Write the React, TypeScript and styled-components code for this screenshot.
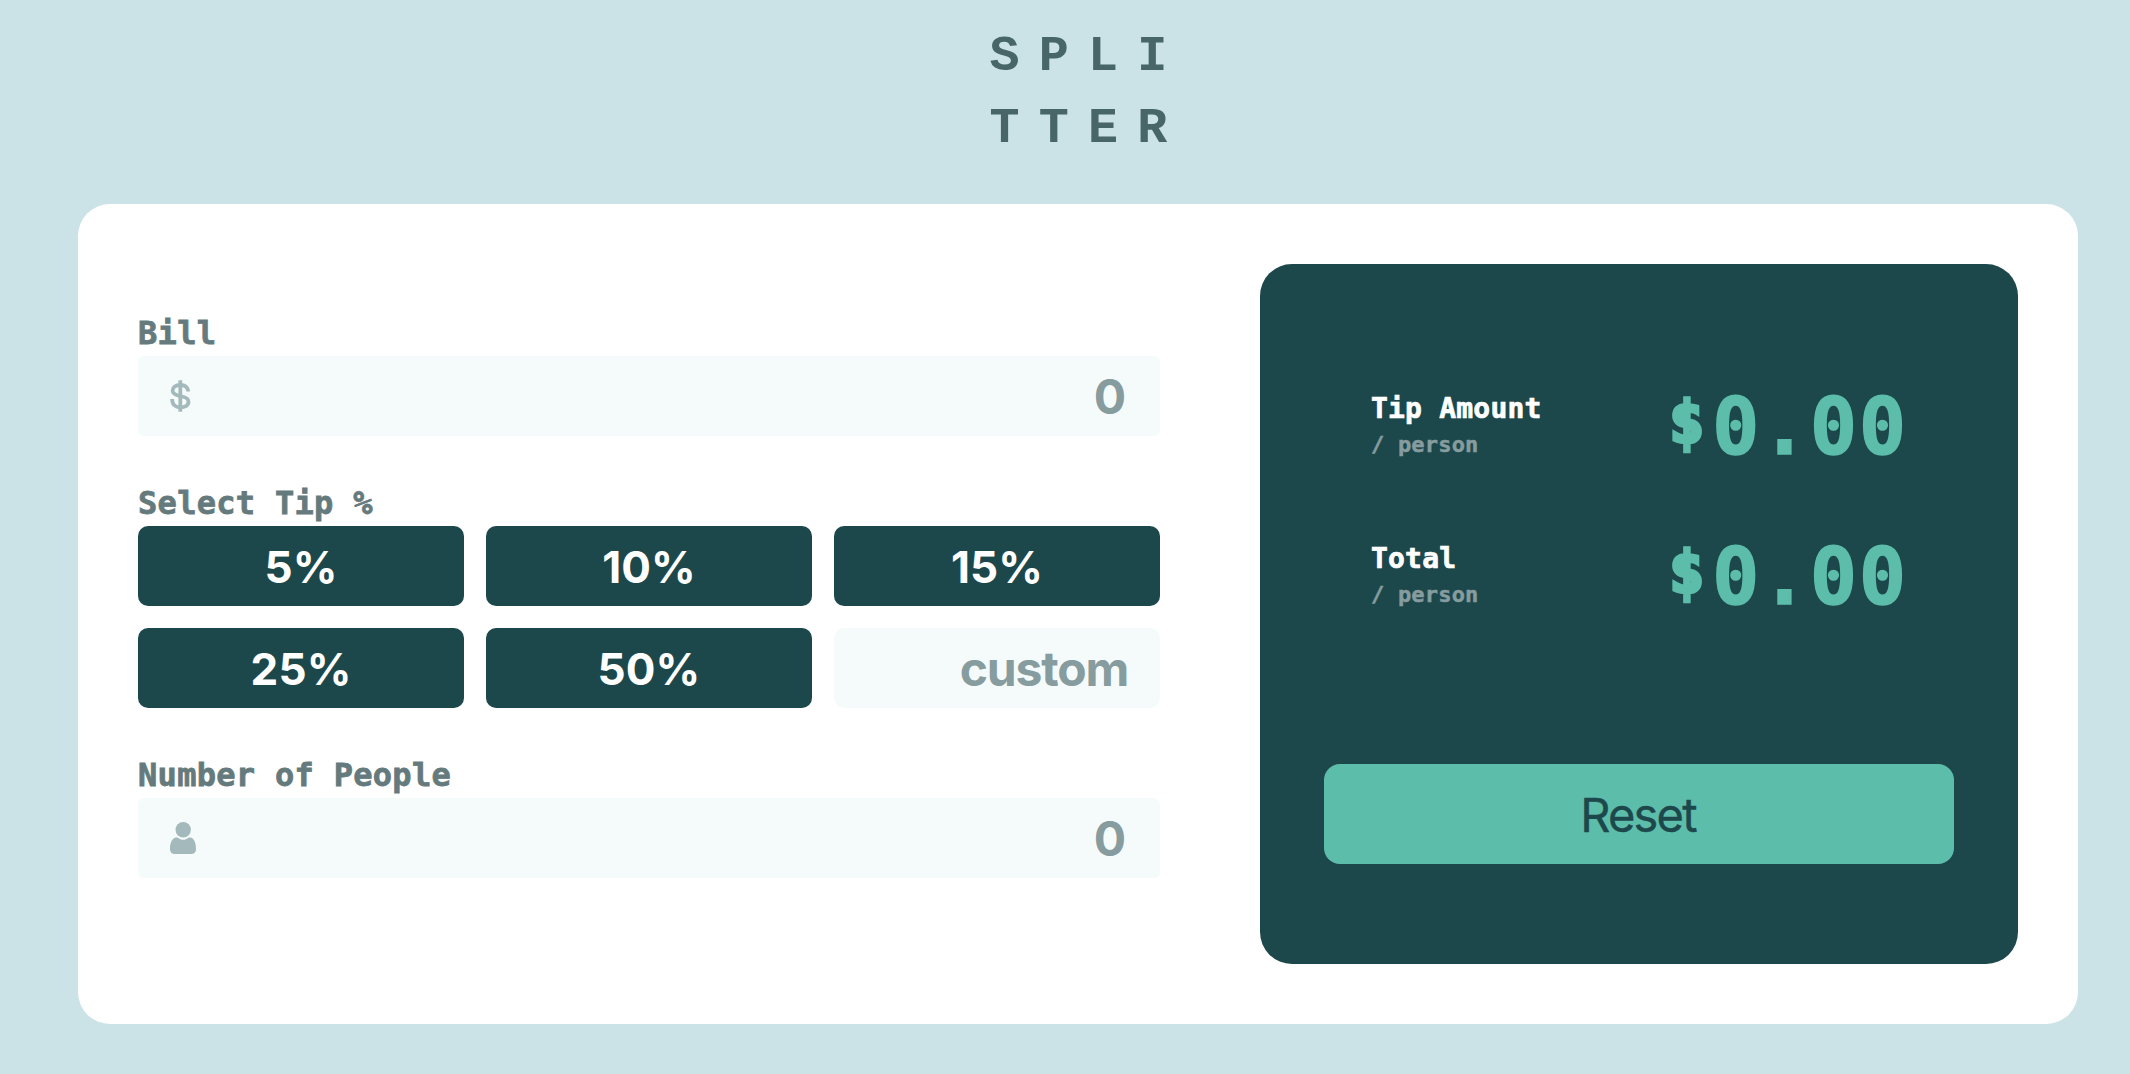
import React, { useState } from "react";
import styled, { createGlobalStyle } from "styled-components";

const colors = {
  page: "#cbe3e6",
  card: "#ffffff",
  dark: "#1d484b",
  teal: "#5dbdab",
  field: "#f5fbfa",
  label: "#657a7d",
  placeholder: "#869c9e",
  icon: "#a3b9bb",
  title: "#486668",
};

const mono = `"DejaVu Sans Mono", "Liberation Mono", monospace`;
const sans = `Inter, "Liberation Sans", sans-serif`;

const GlobalStyle = createGlobalStyle`
  * { box-sizing: border-box; }
  body { margin: 0; background: ${colors.page}; font-family: ${mono}; }
`;

const Page = styled.div`
  min-height: 1074px;
  display: flex;
  flex-direction: column;
  padding: 21px 52px 0 78px;
`;

const Title = styled.h1`
  margin: 0 0 39px;
  padding-left: 20px;
  align-self: center;
  font: 700 50px/72px "Liberation Mono", monospace;
  letter-spacing: 19.2px;
  color: ${colors.title};
  span { display: block; }
`;

const Card = styled.main`
  width: 2000px;
  height: 820px;
  padding: 60px;
  display: grid;
  grid-template-columns: 1022px 758px;
  column-gap: 100px;
  background: ${colors.card};
  border-radius: 32px;
`;

const Form = styled.form`
  display: flex;
  flex-direction: column;
  gap: 44px;
  padding-top: 46px;
`;

const Group = styled.div`
  display: flex;
  flex-direction: column;
`;

const Label = styled.label`
  font: 700 32px/46px ${mono};
  letter-spacing: 0.3px;
  color: ${colors.label};
  -webkit-text-stroke: 0.8px ${colors.label};
`;

const Field = styled.div`
  height: 80px;
  display: flex;
  align-items: center;
  padding: 0 34px 0 32px;
  background: ${colors.field};
  border-radius: 6px;
`;

const Input = styled.input`
  flex: 1;
  min-width: 0;
  height: 80px;
  padding: 1px 0 0;
  border: 0;
  outline: 0;
  background: transparent;
  text-align: right;
  font: 700 48px/78px ${sans};
  color: ${colors.dark};
  &::placeholder { color: ${colors.placeholder}; opacity: 1; }
`;

const TipGrid = styled.div`
  display: grid;
  grid-template-columns: repeat(3, 326px);
  grid-auto-rows: 80px;
  gap: 22px;
`;

const TipButton = styled.button`
  border: 0;
  padding: 2px 0 0;
  border-radius: 10px;
  background: ${colors.dark};
  color: #fff;
  font: 700 44px/78px ${sans};
  letter-spacing: 0.1px;
`;

const CustomTip = styled(Input)`
  width: 326px;
  padding: 1px 32px 0;
  border-radius: 10px;
  background: ${colors.field};
  letter-spacing: -1.2px;
`;

const Panel = styled.section`
  height: 700px;
  padding: 126px 64px 0;
  display: flex;
  flex-direction: column;
  background: ${colors.dark};
  border-radius: 32px;
`;

const Results = styled.div`
  display: flex;
  flex-direction: column;
  gap: 78px;
  padding: 0 46px 0 47px;
  margin-bottom: 152px;
`;

const Result = styled.div`
  height: 72px;
  display: flex;
  justify-content: space-between;
  align-items: center;
`;

const ResultName = styled.div`
  font: 700 28px/38px ${mono};
  letter-spacing: 0.2px;
  color: #fff;
  -webkit-text-stroke: 0.7px #fff;
`;

const ResultUnit = styled.div`
  font: 700 22px/34px ${mono};
  letter-spacing: 0.2px;
  color: ${colors.placeholder};
  -webkit-text-stroke: 0.5px ${colors.placeholder};
`;

const Amount = styled.output`
  display: flex;
  align-items: baseline;
  padding-top: 9px;
  font: 700 78px/72px ${mono};
  letter-spacing: 2px;
  color: ${colors.teal};
  -webkit-text-stroke: 1.6px ${colors.teal};
`;

const Currency = styled.span`
  position: relative;
  top: -11px;
  left: -1px;
  width: 49px;
  text-align: center;
  font-size: 58px;
  letter-spacing: 0;
  -webkit-text-stroke-width: 3.5px;
`;

const ResetButton = styled.button`
  width: 630px;
  height: 100px;
  padding: 2px 2px 0 0;
  border: 0;
  border-radius: 16px;
  background: ${colors.teal};
  color: ${colors.dark};
  font: 400 47px/98px ${sans};
  letter-spacing: -1.8px;
  -webkit-text-stroke: 0.4px ${colors.dark};
`;

const DollarIcon = () => (
  <svg width="21" height="32" viewBox="0 0 21 32" fill="none" stroke={colors.icon} strokeWidth="3.8">
    <path d="M10.3 0.3V31.7" />
    <path d="M18.2 11.5C18.2 7.4 15 5 10.3 5C5.6 5 2.6 7.2 2.6 10.5C2.6 13.7 5 15 10.3 16C15.8 17 18.5 18.6 18.5 21.7C18.5 25.2 15.2 27.3 10.3 27.3C5.3 27.3 2.1 24.6 2.1 18.9" />
  </svg>
);

const PersonIcon = () => (
  <svg width="26" height="32" viewBox="0 0 26 32" fill={colors.icon}>
    <circle cx="13.2" cy="7.7" r="7.7" />
    <path d="M6.2 15.5C8.8 15.5 9.8 17.8 13.2 17.8C16.6 17.8 17.6 15.5 20.2 15.5C24 16 26 20.5 26 27.2C26 30.4 24.2 32 21.2 32H4.8C1.8 32 0 30.4 0 27.2C0 20.5 2.2 16 6.2 15.5Z" />
  </svg>
);

const tips = [5, 10, 15, 25, 50];

export default function App() {
  const [bill, setBill] = useState("");
  const [people, setPeople] = useState("");
  const [custom, setCustom] = useState("");
  const [tip, setTip] = useState(0);

  const rate = (custom ? Number(custom) : tip) / 100;
  const count = Number(people);
  const tipShare = count > 0 ? (Number(bill) * rate) / count : 0;
  const totalShare = count > 0 ? Number(bill) / count + tipShare : 0;

  const reset = () => {
    setBill("");
    setPeople("");
    setCustom("");
    setTip(0);
  };

  return (
    <>
      <GlobalStyle />
      <Page>
        <Title>
          <span>SPLI</span>
          <span>TTER</span>
        </Title>
        <Card>
          <Form onSubmit={(e) => e.preventDefault()}>
            <Group>
              <Label htmlFor="bill">Bill</Label>
              <Field>
                <DollarIcon />
                <Input id="bill" placeholder="0" value={bill} onChange={(e) => setBill(e.target.value)} />
              </Field>
            </Group>
            <Group>
              <Label as="div">Select Tip %</Label>
              <TipGrid>
                {tips.map((t) => (
                  <TipButton key={t} type="button" onClick={() => setTip(t)}>
                    {t}%
                  </TipButton>
                ))}
                <CustomTip placeholder="custom" value={custom} onChange={(e) => setCustom(e.target.value)} />
              </TipGrid>
            </Group>
            <Group>
              <Label htmlFor="people">Number of People</Label>
              <Field>
                <PersonIcon />
                <Input id="people" placeholder="0" value={people} onChange={(e) => setPeople(e.target.value)} />
              </Field>
            </Group>
          </Form>
          <Panel>
            <Results>
              {[
                { name: "Tip Amount", value: tipShare },
                { name: "Total", value: totalShare },
              ].map((r) => (
                <Result key={r.name}>
                  <div>
                    <ResultName>{r.name}</ResultName>
                    <ResultUnit>/ person</ResultUnit>
                  </div>
                  <Amount>
                    <Currency>$</Currency>
                    {r.value.toFixed(2)}
                  </Amount>
                </Result>
              ))}
            </Results>
            <ResetButton type="button" onClick={reset}>
              Reset
            </ResetButton>
          </Panel>
        </Card>
      </Page>
    </>
  );
}
